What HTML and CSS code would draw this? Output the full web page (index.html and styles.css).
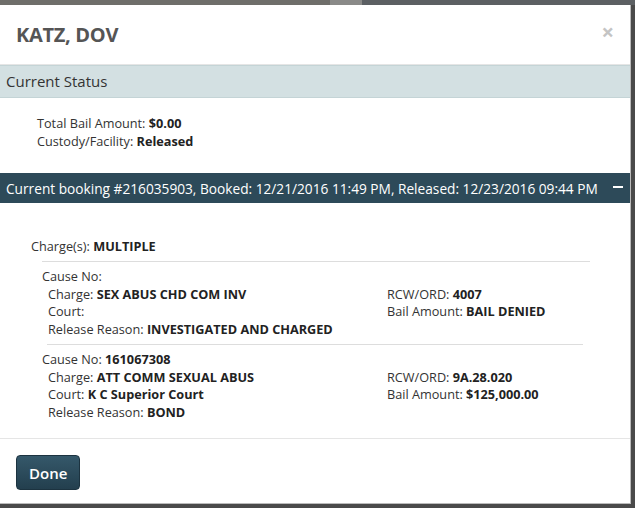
FILE: index.html
```html
<!DOCTYPE html>
<html lang="en">
<head>
  <title>Inmate Details</title>
  <link rel="stylesheet" href="styles.css">
</head>
<body>
  <div class="backdrop-top"></div>

  <div class="modal">
    <div class="modal-header">
      <h2>KATZ, DOV</h2>
      <span class="close">&times;</span>
    </div>

    <div class="section-title">Current Status</div>
    <div class="status">
      <div>Total Bail Amount: <b>$0.00</b></div>
      <div>Custody/Facility: <b>Released</b></div>
    </div>

    <div class="booking-bar">
      <span>Current booking #216035903, Booked: 12/21/2016 11:49 PM, Released: 12/23/2016 09:44 PM</span>
      <span class="toggle"></span>
    </div>

    <div class="booking">
      <div class="charges">Charge(s): <b>MULTIPLE</b></div>

      <div class="charge">
        <div class="cause">Cause No:</div>
        <div class="charge-grid">
          <div>Charge: <b>SEX ABUS CHD COM INV</b></div>
          <div>RCW/ORD: <b>4007</b></div>
          <div>Court:</div>
          <div>Bail Amount: <b>BAIL DENIED</b></div>
          <div>Release Reason: <b>INVESTIGATED AND CHARGED</b></div>
        </div>
      </div>

      <div class="charge">
        <div class="cause">Cause No: <b>161067308</b></div>
        <div class="charge-grid">
          <div>Charge: <b>ATT COMM SEXUAL ABUS</b></div>
          <div>RCW/ORD: <b>9A.28.020</b></div>
          <div>Court: <b>K C Superior Court</b></div>
          <div>Bail Amount: <b>$125,000.00</b></div>
          <div>Release Reason: <b>BOND</b></div>
        </div>
      </div>
    </div>

    <div class="modal-footer">
      <button class="done">Done</button>
    </div>
  </div>
</body>
</html>
```

FILE: styles.css
```css
body {
  margin: 0;
  background: #4a4a4a;
  font-family: "Open Sans", Arial, sans-serif;
  color: #333;
  font-size: 12.7px;
  overflow: hidden;
}

.backdrop-top {
  height: 5px;
  background: linear-gradient(to right, #6f6e6a 0%, #6f6e6a 52%, #8a8a88 52%, #8a8a88 57%, #5c6063 57%);
}

.modal {
  width: 631px;
  height: 499px;
  background: #fff;
  border-right: 1px solid #bbb;
  border-bottom: 1px solid #bbb;
  box-sizing: border-box;
  display: flex;
  flex-direction: column;
}

.modal > * {
  flex-shrink: 0;
}

.modal-header {
  display: flex;
  justify-content: space-between;
  align-items: center;
  height: 59px;
  padding: 0 16px 0 16px;
  border-bottom: 1px solid #e5e5e5;
}

.modal-header h2 {
  margin: 0;
  font-size: 20px;
  font-weight: 700;
  color: #555;
  letter-spacing: -0.3px;
}

.close {
  font-size: 22px;
  font-weight: 700;
  color: #c4c4c4;
  line-height: 1;
  margin-top: -8px;
}

.section-title {
  background: #d3e0e2;
  border-top: 1px solid #c4d4d6;
  border-bottom: 1px solid #c4d4d6;
  font-size: 15px;
  color: #333;
  padding: 6px 6px;
  line-height: 19px;
}

.status {
  padding: 16px 37px 23px;
  line-height: 18px;
}

.status b, .booking b {
  color: #222;
}

.booking-bar {
  display: flex;
  justify-content: space-between;
  align-items: center;
  background: #2d4a59;
  color: #fff;
  font-size: 13.7px;
  font-weight: 400;
  height: 30px;
  padding: 0 6px;
  white-space: nowrap;
}

.toggle {
  width: 10px;
  height: 2px;
  background: #fff;
  margin-right: 1px;
  margin-top: -3px;
}

.booking {
  padding: 34px 40px 11px 31px;
  flex: 1 1 auto;
}

.charges {
  line-height: 18px;
  padding-bottom: 6px;
  border-bottom: 1px solid #ddd;
  margin-left: 11px;
  text-indent: -11px;
}

.charge {
  margin-left: 11px;
  padding: 6px 0 6px;
  line-height: 17.5px;
}

.charge + .charge {
  border-top: 1px solid #ddd;
  margin-left: 16px;
  margin-right: 7px;
  padding-top: 6px;
}

.charge + .charge .cause {
  margin-left: -5px;
}

.charge-grid {
  display: grid;
  grid-template-columns: 339px 1fr;
  padding-left: 6px;
}

.charge + .charge .charge-grid {
  padding-left: 1px;
}

.modal-footer {
  border-top: 1px solid #e5e5e5;
  padding: 16px 16px 14px;
}

.done {
  background: linear-gradient(#35586a, #233f4e);
  color: #fff;
  border: 1px solid #1c3340;
  border-radius: 4px;
  font-family: inherit;
  font-size: 15px;
  font-weight: 600;
  padding: 0 12px;
  height: 35px;
  width: 64px;
}
```
